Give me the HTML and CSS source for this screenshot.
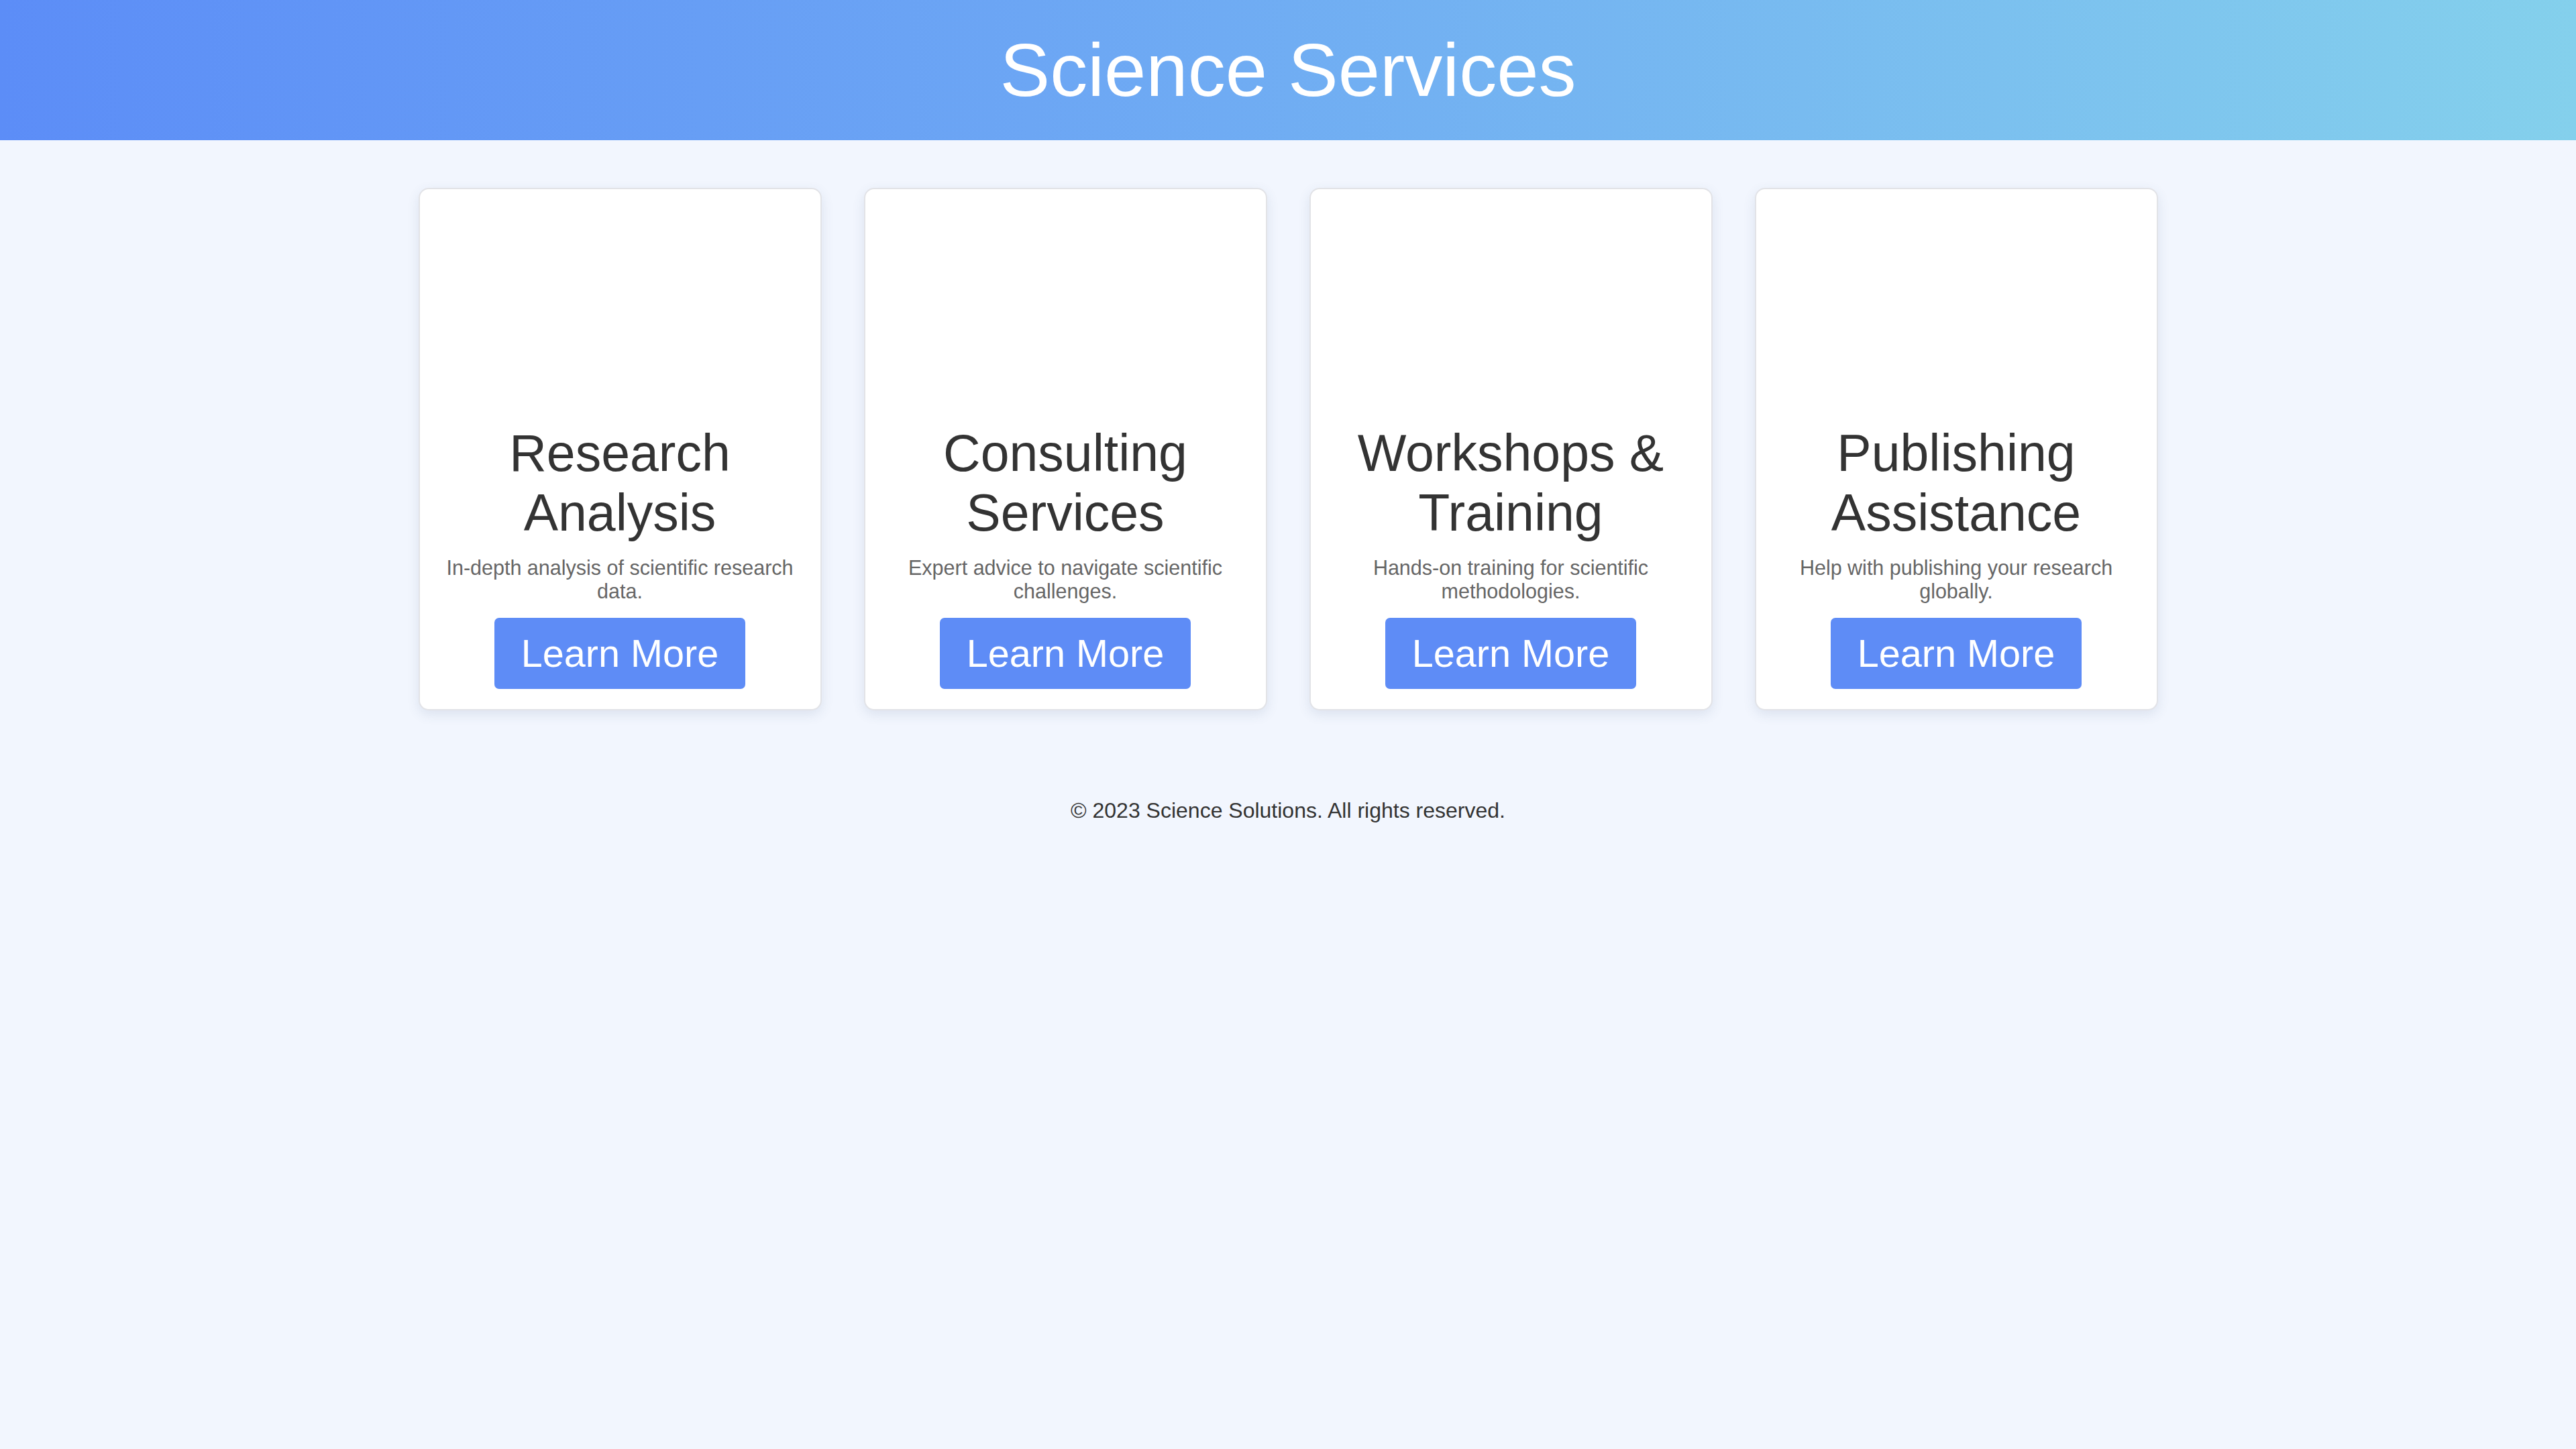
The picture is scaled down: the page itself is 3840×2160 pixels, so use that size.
FILE: index.html
```html
<!DOCTYPE html>
<html lang="en">
<head>
<meta charset="utf-8">
<title>Science Services</title>
<link rel="stylesheet" href="styles.css">
</head>
<body>
<header class="site-header">
  <h1 class="site-title">Science Services</h1>
</header>
<main class="services">
  <div class="card">
    <div class="card-media"></div>
    <h2 class="card-title">Research Analysis</h2>
    <p class="card-text">In-depth analysis of scientific research data.</p>
    <a class="btn" href="#">Learn More</a>
  </div>
  <div class="card">
    <div class="card-media"></div>
    <h2 class="card-title">Consulting Services</h2>
    <p class="card-text">Expert advice to navigate scientific challenges.</p>
    <a class="btn" href="#">Learn More</a>
  </div>
  <div class="card">
    <div class="card-media"></div>
    <h2 class="card-title">Workshops &amp; Training</h2>
    <p class="card-text">Hands-on training for scientific methodologies.</p>
    <a class="btn" href="#">Learn More</a>
  </div>
  <div class="card">
    <div class="card-media"></div>
    <h2 class="card-title">Publishing Assistance</h2>
    <p class="card-text">Help with publishing your research globally.</p>
    <a class="btn" href="#">Learn More</a>
  </div>
</main>
<footer class="site-footer">
  <p class="copy">&copy; 2023 Science Solutions. All rights reserved.</p>
</footer>
</body>
</html>
```

FILE: styles.css
```css
* { box-sizing: border-box; }

html, body {
  margin: 0;
  padding: 0;
}

body {
  background: #f2f6fe;
  font-family: "Liberation Sans", Arial, sans-serif;
  color: #333;
  min-height: 2160px;
}

.site-header {
  background: linear-gradient(90deg, #5c8df7 0%, #6ca6f4 40%, #84d0ec 100%);
  padding: 40px 0;
  text-align: center;
}

.site-title {
  margin: 0;
  font-size: 112px;
  font-weight: 400;
  line-height: normal;
  color: #fff;
}

.services {
  display: flex;
  justify-content: center;
  gap: 63px;
  padding: 71px 0 0;
}

.card {
  width: 601px;
  background: #fff;
  border: 2px solid #e2e3e7;
  border-radius: 15px;
  box-shadow: 0 6px 18px rgba(60, 80, 120, 0.12);
  padding: 27px 27px 30px;
  text-align: center;
  display: flex;
  flex-direction: column;
  align-items: center;
}

.card-media {
  width: 100%;
  height: 322px;
}

.card-title {
  margin: 0 0 20px;
  font-size: 77px;
  font-weight: 400;
  line-height: normal;
  color: #333;
}

.card-text {
  margin: 0 0 22px;
  font-size: 30.5px;
  line-height: normal;
  color: #666;
}

.btn {
  display: inline-block;
  background: #5e8cf6;
  color: #fff;
  text-decoration: none;
  font-size: 57.6px;
  line-height: normal;
  padding: 20px 40px;
  border-radius: 7px;
}

.site-footer {
  text-align: center;
  padding: 131px 0 0;
}

.copy {
  margin: 0;
  font-size: 32px;
  line-height: normal;
  color: #333;
}
```
